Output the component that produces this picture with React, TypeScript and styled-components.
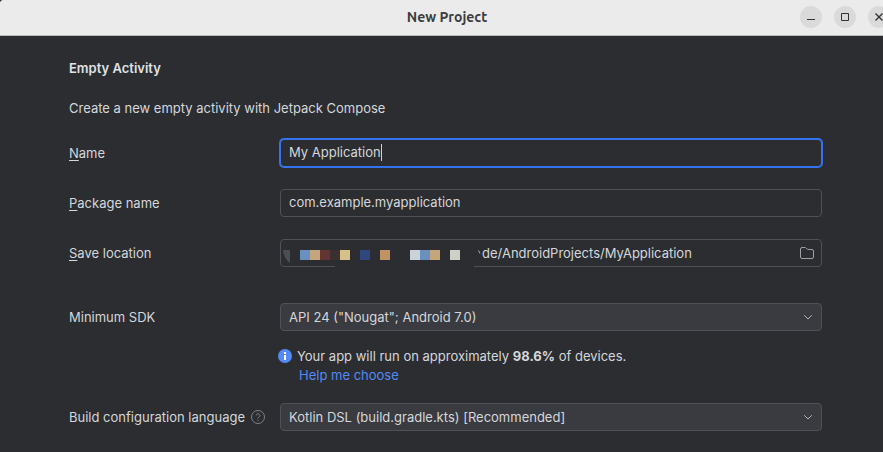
import React from "react";
import styled, { createGlobalStyle } from "styled-components";

const Global = createGlobalStyle`
  * { box-sizing: border-box; }
  html, body { margin: 0; background: #2b2d30; }
  body {
    color: #d5d7dc;
    font: 13px/20px Inter, "Liberation Sans", sans-serif;
  }
  button, input, select { font: inherit; color: inherit; }
`;

const Window = styled.div`
  min-height: 100vh;
  display: flex;
  flex-direction: column;
  background: #2b2d30;
`;

const TitleBacking = styled.div`
  background: #111;
`;

const TitleBar = styled.header`
  height: 36px;
  flex: none;
  display: grid;
  grid-template-columns: 1fr auto 1fr;
  align-items: center;
  padding-bottom: 1px;
  background: #ebebeb;
  border-bottom: 1px solid #b9b9b9;
  border-top-left-radius: 3px;
  overflow: hidden;
`;

const Title = styled.h1`
  grid-column: 2;
  margin: 0 0 0 11px;
  color: #3d3d3d;
  font: 700 14px/20px Ubuntu, "Noto Sans", sans-serif;
`;

const WindowControls = styled.div`
  justify-self: end;
  display: flex;
  gap: 12px;
  margin-right: -7px;
`;

const ControlButton = styled.button`
  width: 22px;
  height: 22px;
  padding: 0;
  border: 0;
  border-radius: 50%;
  display: grid;
  place-items: center;
  background: #dadada;
  color: #333;
`;

const Form = styled.form`
  display: flex;
  flex-direction: column;
  padding: 22px 61px 16px 69px;
`;

const Heading = styled.h2`
  margin: 0 0 20px;
  font-size: 13px;
  line-height: 20px;
  font-weight: 600;
  color: #dfe1e5;
`;

const Description = styled.p`
  margin: 0 0 21px;
`;

const Row = styled.div<{ $gap?: number }>`
  display: grid;
  grid-template-columns: 211px minmax(0, 1fr);
  align-items: center;
  margin-bottom: ${(p) => p.$gap ?? 22}px;
`;

const LabelCell = styled.div`
  display: flex;
  align-items: center;
  gap: 6px;
  white-space: nowrap;
`;

const Mnemonic = styled.span`
  text-decoration: underline;
  text-underline-offset: 2px;
`;

const FieldWrap = styled.div`
  position: relative;
  display: flex;
`;

const TextInput = styled.input`
  width: 100%;
  height: 28px;
  padding: 0 8px 2px;
  border: 1px solid #4e5157;
  border-radius: 4px;
  background: #2b2d30;
  outline: none;
  &:focus {
    border-color: #3574f0;
    box-shadow: 0 0 0 1px #3574f0;
    caret-color: transparent;
  }
`;

const Caret = styled.span`
  position: absolute;
  left: 101px;
  top: 5px;
  width: 1px;
  height: 17px;
  background: #ced0d6;
  pointer-events: none;
`;

const PathField = styled.div`
  position: relative;
  height: 28px;
  display: flex;
  align-items: center;
  padding-right: 6px;
  border: 1px solid #4e5157;
  border-radius: 4px;
`;

const PathInput = styled.input`
  flex: 1;
  min-width: 0;
  padding: 0 0 0 201px;
  border: 0;
  outline: none;
  background: transparent;
`;

const Redaction = styled.svg`
  position: absolute;
  left: 1px;
  top: 6px;
`;

const IconButton = styled.button`
  width: 16px;
  height: 16px;
  padding: 0;
  border: 0;
  display: grid;
  background: transparent;
  color: #9da0a8;
`;

const SelectBox = styled.div`
  display: grid;
  align-items: center;
  & > * { grid-area: 1 / 1; }
  & > svg { justify-self: end; margin-right: 6px; pointer-events: none; }
`;

const Select = styled.select`
  appearance: none;
  width: 100%;
  height: 28px;
  padding: 0 28px 0 8px;
  border: 1px solid #4e5157;
  border-radius: 4px;
  background: #393b40;
  outline: none;
`;

const Hint = styled.div`
  display: grid;
  grid-template-columns: 14px minmax(0, 1fr);
  column-gap: 5px;
  align-items: center;
  margin: -7px 0 19px 209px;
`;

const HelpLink = styled.a`
  grid-column: 2;
  margin-left: 2px;
  line-height: 18px;
  color: #548af7;
  text-decoration: none;
`;

const mosaic: [number, string][] = [
  [300, "#6a90c0"], [310, "#c4a57c"], [320, "#633434"], [330, "#3b2f31"],
  [340, "#d6c188"], [360, "#2f467f"], [380, "#bf9363"], [410, "#c9d3da"],
  [420, "#6a90c0"], [430, "#c4a57c"], [450, "#cdd0c6"],
];

const Chevron = () => (
  <svg width="16" height="16" viewBox="0 0 16 16" fill="none" stroke="#b4b8bf" strokeLinecap="round" strokeLinejoin="round" aria-hidden="true">
    <path d="M4.5 6.5 8 10l3.5-3.5" />
  </svg>
);

export default function App() {
  return (
    <Window>
      <Global />
      <TitleBacking>
        <TitleBar>
          <Title>New Project</Title>
          <WindowControls>
            <ControlButton aria-label="Minimize">
              <svg width="10" height="10" viewBox="0 0 10 10"><path d="M1 7.5h8" stroke="currentColor" /></svg>
            </ControlButton>
            <ControlButton aria-label="Maximize">
              <svg width="10" height="10" viewBox="0 0 10 10"><path d="M1.5 1.5h7v7h-7z" fill="none" stroke="currentColor" /></svg>
            </ControlButton>
            <ControlButton aria-label="Close">
              <svg width="10" height="10" viewBox="0 0 10 10"><path d="m1.5 1.5 7 7m0-7-7 7" stroke="currentColor" strokeWidth="1.4" /></svg>
            </ControlButton>
          </WindowControls>
        </TitleBar>
      </TitleBacking>
      <Form onSubmit={(e) => e.preventDefault()}>
        <Heading>Empty Activity</Heading>
        <Description>Create a new empty activity with Jetpack Compose</Description>
        <Row>
          <label htmlFor="name"><Mnemonic>N</Mnemonic>ame</label>
          <FieldWrap>
            <TextInput id="name" defaultValue="My Application" autoFocus spellCheck={false} />
            <Caret />
          </FieldWrap>
        </Row>
        <Row>
          <label htmlFor="package"><Mnemonic>P</Mnemonic>ackage name</label>
          <TextInput id="package" defaultValue="com.example.myapplication" spellCheck={false} />
        </Row>
        <Row $gap={36}>
          <label htmlFor="location"><Mnemonic>S</Mnemonic>ave location</label>
          <PathField>
            <PathInput id="location" defaultValue="de/AndroidProjects/MyApplication" spellCheck={false} />
            <Redaction width="200" height="22" viewBox="282 246 200 22" aria-hidden="true">
              <path d="M335 264h139v4H335z" fill="#2b2d30" />
              <path d="M283 250h7v13q-6-4-7-13z" fill="#4b4e54" />
              {mosaic.map(([x, fill]) => (
                <rect key={x} x={x} y="250" width="10" height="10" fill={fill} />
              ))}
              <path d="m478.500 250.500 1.500 3" stroke="#b7a894" />
            </Redaction>
            <IconButton type="button" aria-label="Browse">
              <svg width="16" height="16" viewBox="0 0 16 16" fill="none" stroke="currentColor">
                <path d="M1.500 4A1.500 1.500 0 0 1 3 2.500h3.200a1 1 0 0 1 .7.300L8.600 4.500H13A1.500 1.500 0 0 1 14.500 6v6a1.500 1.500 0 0 1-1.500 1.500H3A1.500 1.500 0 0 1 1.500 12z" />
              </svg>
            </IconButton>
          </PathField>
        </Row>
        <Row>
          <label htmlFor="sdk">Minimum SDK</label>
          <SelectBox>
            <Select id="sdk"><option>API 24 ("Nougat"; Android 7.0)</option></Select>
            <Chevron />
          </SelectBox>
        </Row>
        <Hint>
          <svg width="14" height="14" viewBox="0 0 14 14" aria-hidden="true">
            <circle cx="7" cy="7" r="7" fill="#548af7" />
            <path d="M6 3h2v2H6zM6 6h2v5H6z" fill="#fff" />
          </svg>
          <span>Your app will run on approximately <b>98.6%</b> of devices.</span>
          <HelpLink href="#help">Help me choose</HelpLink>
        </Hint>
        <Row $gap={0}>
          <LabelCell>
            <label htmlFor="language">Build configuration language</label>
            <svg width="14" height="14" viewBox="0 0 14 14" fill="none" stroke="#7d8087" role="img" aria-label="Help">
              <circle cx="7" cy="7" r="6.500" />
              <path d="M5.200 5.500a1.800 1.800 0 1 1 2.700 1.600Q7 7.600 7 8.500M7 9.700v1.200" />
            </svg>
          </LabelCell>
          <SelectBox>
            <Select id="language"><option>Kotlin DSL (build.gradle.kts) [Recommended]</option></Select>
            <Chevron />
          </SelectBox>
        </Row>
      </Form>
    </Window>
  );
}
